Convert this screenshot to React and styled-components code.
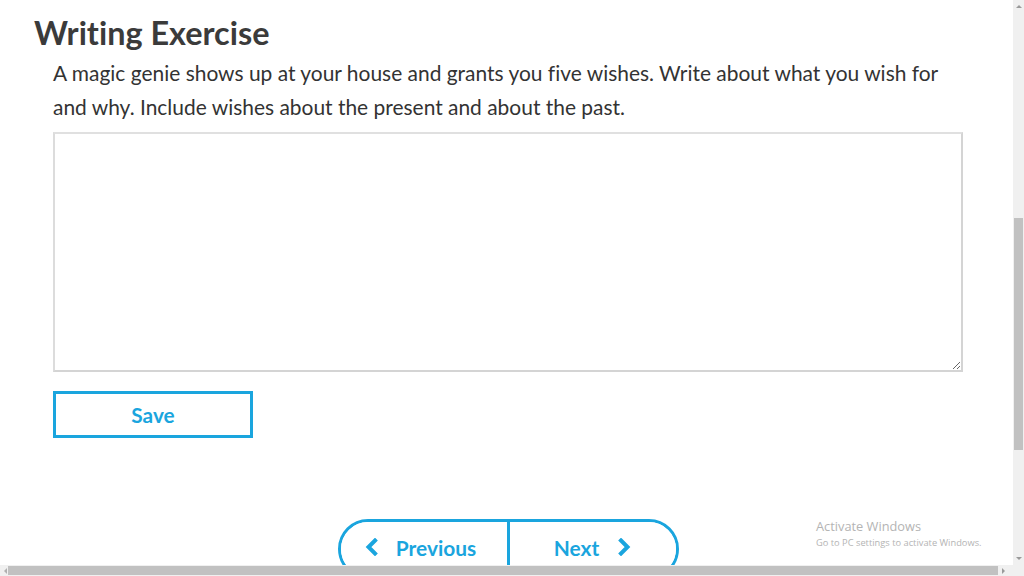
import React from 'react';
import styled, { createGlobalStyle } from 'styled-components';

const GlobalStyle = createGlobalStyle`
  html, body {
    margin: 0;
    padding: 0;
    overflow: hidden;
    background: #fff;
    font-family: Lato, "Open Sans", sans-serif;
    font-variant-ligatures: none;
  }
`;

const Screen = styled.div`
  width: 1024px;
  height: 576px;
  display: grid;
  grid-template-columns: 1013px 11px;
  grid-template-rows: 565px 11px;
  position: relative;
  overflow: hidden;
`;

const Viewport = styled.div`
  overflow: hidden;
  background: #fff;
`;

const Page = styled.div`
  padding: 14px 50px 0 34px;
  display: flex;
  flex-direction: column;
`;

const Title = styled.h1`
  margin: 0;
  font-size: 32.4px;
  line-height: 38px;
  font-weight: 700;
  color: #3b3b3b;
`;

const Body = styled.div`
  padding-left: 19px;
  width: 910px;
  display: flex;
  flex-direction: column;
`;

const Prompt = styled.p`
  margin: 4px 0 0;
  font-size: 20.95px;
  line-height: 34px;
  color: #333;
`;

const Answer = styled.textarea`
  box-sizing: border-box;
  margin: 8px 0 0;
  width: 910px;
  height: 240px;
  border: 2px solid #d4d4d4;
  border-top-color: #e0e0e0;
  border-left-color: #dcdcdc;
  resize: vertical;
  font-family: inherit;
  font-size: 16px;
  outline: none;
`;

const SaveButton = styled.button`
  box-sizing: border-box;
  margin-top: 19px;
  width: 200px;
  height: 47px;
  background: #fff;
  border: 3px solid #1aa5de;
  color: #1aa5de;
  font-family: inherit;
  font-size: 20.8px;
  font-weight: 700;
  cursor: pointer;
`;

const NavRow = styled.div`
  display: flex;
  justify-content: center;
  margin-top: 81px;
`;

const Pill = styled.div`
  box-sizing: border-box;
  display: flex;
  width: 341px;
  height: 60px;
  border: 3px solid #1aa5de;
  border-radius: 32px;
  overflow: hidden;
  margin-left: 19px;
`;

const NavButton = styled.button`
  flex: 0 0 ${(p) => p.$width}px;
  box-sizing: border-box;
  display: flex;
  align-items: flex-start;
  justify-content: center;
  gap: ${(p) => p.$gap}px;
  background: #fff;
  border: none;
  border-left: ${(p) => (p.$divider ? '3px solid #1aa5de' : 'none')};
  color: #1aa5de;
  font-family: inherit;
  font-size: 20.9px;
  font-weight: 700;
  padding: 13px ${(p) => p.$shift}px 0 0;
  cursor: pointer;

  svg {
    margin-top: 3px;
  }
`;

const Chevron = ({ dir }) => (
  <svg width="13" height="18" viewBox="0 0 13 18">
    <path
      d={dir === 'left' ? 'M10 2.5 L3.5 9 L10 15.5' : 'M3 2.5 L9.5 9 L3 15.5'}
      fill="none"
      stroke="#1aa5de"
      strokeWidth="4"
      strokeLinecap="square"
      strokeLinejoin="miter"
    />
  </svg>
);

const VScroll = styled.div`
  background: #f0f0f0;
  display: flex;
  flex-direction: column;
  align-items: center;
`;

const VThumb = styled.div`
  width: 9px;
  height: 232px;
  margin-top: 210px;
  background: #c1c1c1;
`;

const HScroll = styled.div`
  background: #f0f0f0;
  display: flex;
  align-items: center;
`;

const HThumb = styled.div`
  width: 990px;
  height: 9px;
  background: #c1c1c1;
  margin: 0 4px 0 1px;
`;

const Arrow = styled.span`
  display: block;
  width: 0;
  height: 0;
  flex: none;
  border: 3px solid transparent;
  ${(p) => p.$dir === 'up' && 'border-bottom-color: #9a9a9a; border-top-width: 0; margin-top: 5px;'}
  ${(p) => p.$dir === 'down' && 'border-top-color: #9a9a9a; border-bottom-width: 0; margin-top: auto; margin-bottom: 5px;'}
  ${(p) => p.$dir === 'left' && 'border-right-color: #b0b0b0; border-left-width: 0; margin-left: 4px;'}
  ${(p) => p.$dir === 'right' && 'border-left-color: #9a9a9a; border-right-width: 0;'}
`;

const Corner = styled.div`
  background: #f0f0f0;
`;

const Watermark = styled.div`
  position: absolute;
  left: 816px;
  top: 519px;
  color: #b4b4b4;
  font-family: "Open Sans", "Noto Sans", sans-serif;
  line-height: 1.2;
`;

const WatermarkTitle = styled.div`
  font-size: 12.8px;
`;

const WatermarkSub = styled.div`
  font-size: 9.3px;
  margin-top: 3px;
`;

export default function App() {
  return (
    <>
      <GlobalStyle />
      <Screen>
        <Viewport>
          <Page>
            <Title>Writing Exercise</Title>
            <Body>
              <Prompt>
                A magic genie shows up at your house and grants you five wishes. Write about what you wish for
                and why. Include wishes about the present and about the past.
              </Prompt>
              <Answer />
              <SaveButton>Save</SaveButton>
            </Body>
            <NavRow>
              <Pill>
                <NavButton $width={166} $gap={18} $shift={6}>
                  <Chevron dir="left" />
                  Previous
                </NavButton>
                <NavButton $divider $width={169} $gap={19} $shift={0}>
                  Next
                  <Chevron dir="right" />
                </NavButton>
              </Pill>
            </NavRow>
          </Page>
        </Viewport>
        <VScroll>
          <Arrow $dir="up" />
          <VThumb />
          <Arrow $dir="down" />
        </VScroll>
        <HScroll>
          <Arrow $dir="left" />
          <HThumb />
          <Arrow $dir="right" />
        </HScroll>
        <Corner />
        <Watermark>
          <WatermarkTitle>Activate Windows</WatermarkTitle>
          <WatermarkSub>Go to PC settings to activate Windows.</WatermarkSub>
        </Watermark>
      </Screen>
    </>
  );
}
